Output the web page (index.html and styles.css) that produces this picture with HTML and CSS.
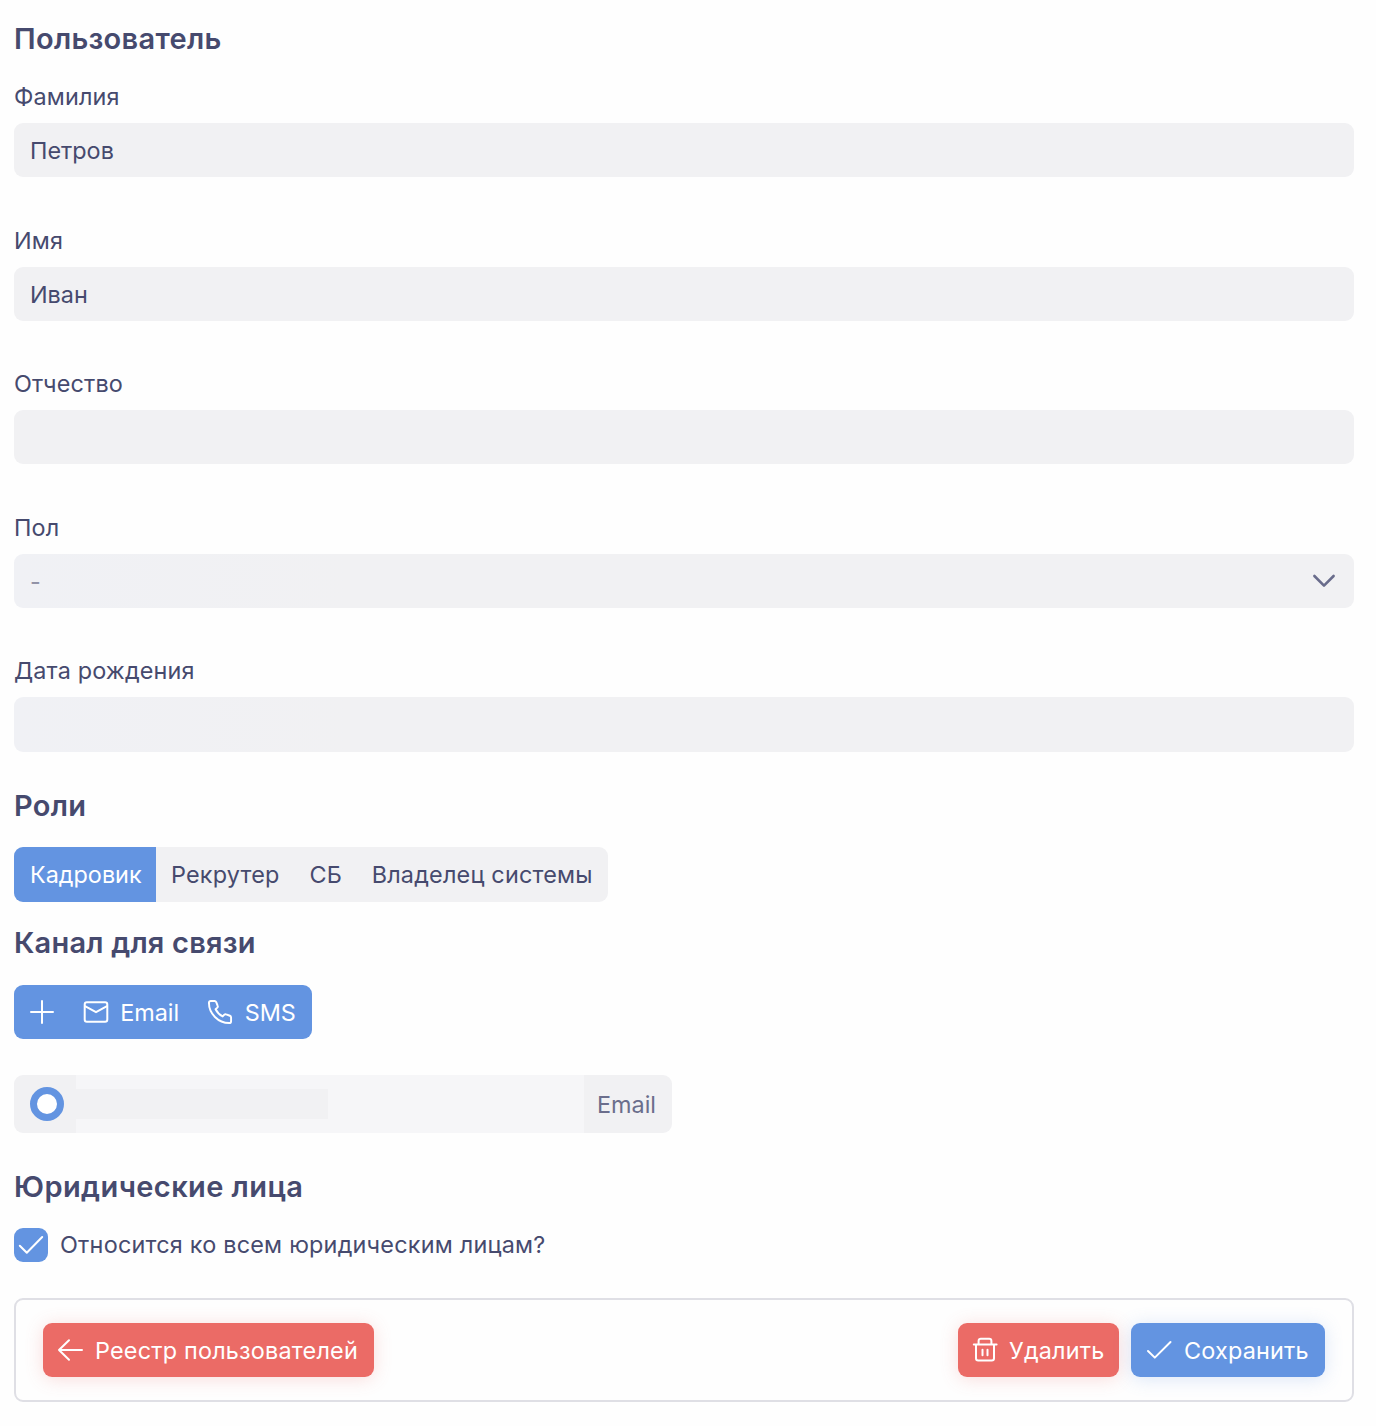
FILE: index.html
```html
<!DOCTYPE html>
<html lang="ru">
<head>
<meta charset="utf-8">
<title>Пользователь</title>
<link rel="stylesheet" href="styles.css">
</head>
<body>
<form class="page">
  <h2 class="title">Пользователь</h2>
  <div class="fields">
    <div class="field"><label class="label">Фамилия</label><div class="input">Петров</div></div>
    <div class="field"><label class="label">Имя</label><div class="input">Иван</div></div>
    <div class="field"><label class="label">Отчество</label><div class="input"></div></div>
    <div class="field"><label class="label">Пол</label><div class="input select"><span class="placeholder">-</span>
      <svg class="chevron" viewBox="0 0 24 16"><path d="M2.4 3 12 12.6 21.6 3"/></svg></div></div>
    <div class="field"><label class="label">Дата рождения</label><div class="input date"></div></div>
  </div>

  <h2 class="title roles-title">Роли</h2>
  <div class="group roles">
    <span class="role role-active">Кадровик</span><span class="role">Рекрутер</span><span class="role">СБ</span><span class="role">Владелец системы</span>
  </div>

  <h2 class="title channel-title">Канал для связи</h2>
  <div class="group channels">
    <span class="channel channel-add"><svg class="icon" viewBox="0 0 26 26"><path d="M13 2v22M2 13h22"/></svg></span>
    <span class="channel channel-email"><svg class="icon" viewBox="0 0 26 26"><rect x="1.7" y="3.2" width="22.6" height="19.6" rx="2.2"/><path d="M2 7.2 13 13.200 24 7.2"/></svg>Email</span>
    <span class="channel channel-sms"><svg class="icon" viewBox="-.5 -.5 27 27"><path d="M3.500 1.500H7.300c.8 0 1.500.5 1.800 1.200l1.500 3.900c.3.7.1 1.400-.4 1.900L8.400 10.200c1.500 3 4.200 5.800 7.400 7.400l1.700-1.800c.5-.5 1.200-.7 1.900-.4l3.900 1.500c.7.3 1.200 1 1.200 1.800v3.800c0 1.100-.9 2-2 2C11.200 24.500 1.500 14.800 1.500 3.500c0-1.100.9-2 2-2Z"/></svg>SMS</span>
  </div>

  <div class="contact">
    <span class="contact-radio"><span class="radio"></span></span>
    <span class="contact-value"><span class="mask"></span></span>
    <span class="contact-type">Email</span>
  </div>

  <h2 class="title legal-title">Юридические лица</h2>
  <div class="check-row">
    <span class="checkbox"><svg class="icon" viewBox="0 0 26 26"><path d="M1.800 13.800 8.800 20.800 24.200 5"/></svg></span>
    <span class="check-label">Относится ко всем юридическим лицам?</span>
  </div>

  <div class="actions">
    <span class="button danger back"><svg class="icon" viewBox="0 0 26 26"><path d="M25 13H2M12 3.200 2 13l10 9.800"/></svg><span>Реестр пользователей</span></span>
    <span class="button danger delete"><svg class="icon" viewBox="0 0 26 26"><path d="M1.800 7.500h22.800M4 7.500v13.800c0 1.300.9 2.200 2.200 2.200h13.600c1.300 0 2.200-.9 2.200-2.200V7.500M6.600 7V3.900c0-1.300.9-2.200 2.200-2.200h8.400c1.300 0 2.200.9 2.200 2.200V7M10.500 12.700v5.500M15.500 12.700v5.500"/></svg><span>Удалить</span></span>
    <span class="button primary save"><svg class="icon" viewBox="0 0 26 26"><path d="M2 14 8.800 20.600 24.500 5"/></svg><span>Сохранить</span></span>
  </div>
</form>
</body>
</html>
```

FILE: styles.css
```css
* { box-sizing: border-box; }
body {
  margin: 0;
  background: #fefefe;
  color: #464a6e;
  font: 400 23.4px/36px Inter, "Noto Sans", sans-serif;
  letter-spacing: 0.15px;
}
.page { padding: 21px 22px 22px 14px; }
.title { margin: 0; font-size: 29px; line-height: 36px; font-weight: 600; letter-spacing: 0.3px; }
.fields { display: flex; flex-direction: column; gap: 45.6px; margin-top: 22px; }
.field { display: flex; flex-direction: column; gap: 8px; }
.input {
  display: flex;
  align-items: center;
  height: 54px;
  padding: 2px 16px 0;
  border-radius: 9px;
  background: #f1f1f3;
  letter-spacing: 0;
}
.select, .date { background: linear-gradient(90deg, #f0f1f5, #f1f1f3 25%); }
.select { justify-content: space-between; }
.date { height: 54.6px; }
.placeholder { color: #9092a6; }
.chevron { width: 24px; height: 16px; margin: 0 2px 1px 0; fill: none; stroke: #696c8b; stroke-width: 2.6; stroke-linecap: round; stroke-linejoin: round; }
.icon { flex: none; width: 26px; height: 26px; fill: none; stroke: #fff; stroke-width: 2; stroke-linecap: round; stroke-linejoin: round; }

.roles-title { margin-top: 36px; }
.group { display: flex; width: max-content; height: 54px; border-radius: 9px; overflow: hidden; }
.roles { height: 54.6px; margin-top: 23.4px; background: #f1f1f3; letter-spacing: 0.2px; }
.role { display: flex; align-items: center; padding: 0 15px; white-space: nowrap; }
.role:last-child { padding-left: 14.5px; padding-right: 15.5px; }
.role-active { width: 142px; padding: 0 0 0 16px; background: #6394e1; color: #fff; letter-spacing: 0; }

.channel-title { margin-top: 23px; letter-spacing: 0.2px; }
.channels { margin-top: 24px; background: #6394e1; color: #fff; letter-spacing: 0; }
.channel { display: flex; align-items: center; gap: 11.5px; padding: 2px 14px 0; }
.channel .icon { margin-bottom: 1px; }
.channel-add { padding: 2px 13.7px 0 15px; }
.channel-sms { padding-right: 16px; }

.contact { display: flex; width: 658px; height: 58px; margin-top: 36px; border-radius: 9px; overflow: hidden; background: #f1f1f3; }
.contact-radio { display: flex; align-items: center; width: 62px; padding-left: 16px; }
.radio { width: 34px; height: 34px; border: 7px solid #6394e1; border-radius: 50%; background: #fff; }
.contact-value { display: flex; align-items: center; width: 508px; background: #f6f6f8; }
.mask { width: 252px; height: 30px; background: #f1f1f3; }
.contact-type { display: flex; align-items: center; padding: 2px 0 0 13px; color: #6b6e8c; letter-spacing: 0; }

.legal-title { margin-top: 36px; letter-spacing: 0.42px; }
.check-row { display: flex; align-items: center; gap: 12px; height: 34px; margin-top: 23px; }
.checkbox { display: flex; align-items: center; justify-content: center; width: 34px; height: 34px; border-radius: 9px; background: #6394e1; }
.check-label { letter-spacing: 0.22px; }

.actions { display: flex; align-items: center; gap: 12px; height: 104px; margin-top: 36px; padding: 0 27px; border: 2px solid #dfdfe5; border-radius: 9px; }
.button { display: flex; align-items: center; gap: 12px; height: 54px; padding: 2px 0 0 14px; border-radius: 9px; color: #fff; white-space: nowrap; letter-spacing: 0.2px; }
.button .icon { margin-bottom: 1px; }
.danger { background: #eb6b66; box-shadow: 0 2px 18px rgba(235, 107, 102, 0.23); }
.primary { background: #6394e1; box-shadow: 0 2px 18px rgba(99, 148, 225, 0.23); }
.back { width: 331px; margin-right: auto; }
.delete { width: 161px; gap: 11px; }
.save { width: 194px; gap: 12px; padding-left: 15px; }
```
